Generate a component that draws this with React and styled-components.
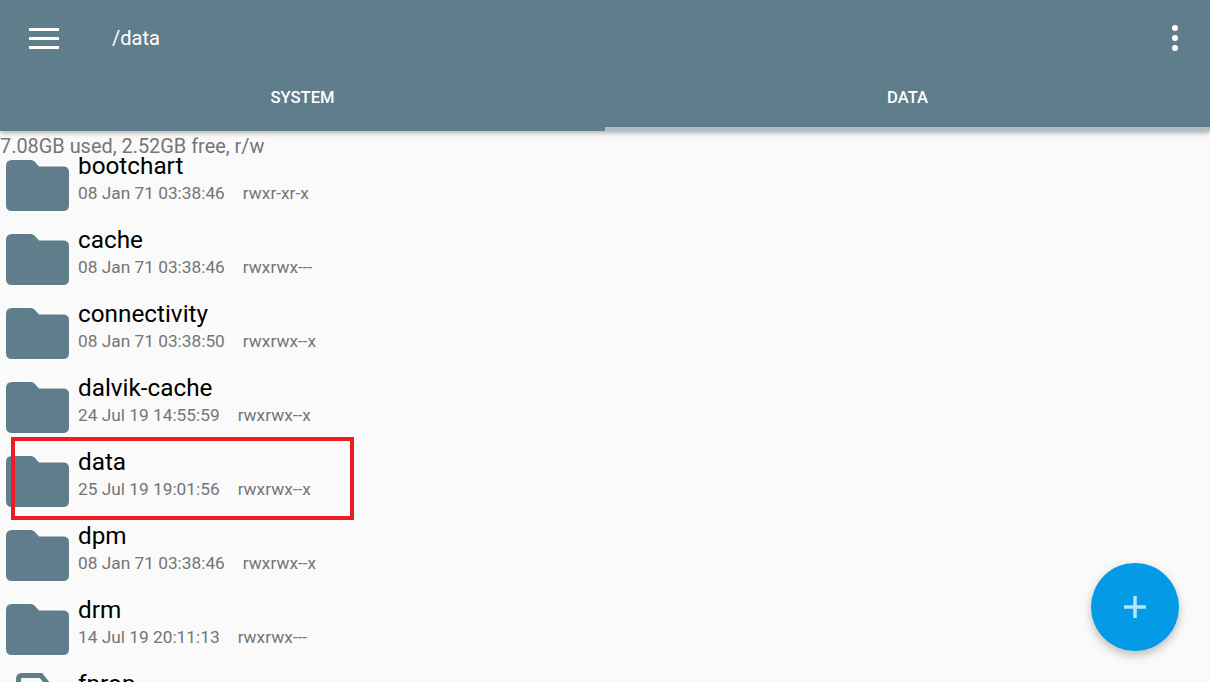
import React from 'react';
import styled, { createGlobalStyle } from 'styled-components';

const files = [
  { name: 'bootchart', date: '08 Jan 71 03:38:46', perms: 'rwxr-xr-x' },
  { name: 'cache', date: '08 Jan 71 03:38:46', perms: 'rwxrwx---' },
  { name: 'connectivity', date: '08 Jan 71 03:38:50', perms: 'rwxrwx--x' },
  { name: 'dalvik-cache', date: '24 Jul 19 14:55:59', perms: 'rwxrwx--x' },
  { name: 'data', date: '25 Jul 19 19:01:56', perms: 'rwxrwx--x' },
  { name: 'dpm', date: '08 Jan 71 03:38:46', perms: 'rwxrwx--x' },
  { name: 'drm', date: '14 Jul 19 20:11:13', perms: 'rwxrwx---' },
  { name: 'fprop', date: '', perms: '', isFile: true },
];

const GlobalStyle = createGlobalStyle`
  html, body {
    margin: 0;
    padding: 0;
    height: 100%;
    overflow: hidden;
    background: #fafafa;
    font-family: Roboto, "Liberation Sans", sans-serif;
  }
`;

const Page = styled.div`
  position: relative;
  width: 1210px;
  height: 682px;
  display: flex;
  flex-direction: column;
  background: #fafafa;
  overflow: hidden;
`;

const AppBar = styled.header`
  flex: none;
  height: 131px;
  background: #607d8b;
  display: flex;
  flex-direction: column;
  box-shadow: 0 2px 5px rgba(0, 0, 0, 0.3);
  z-index: 1;
`;

const Toolbar = styled.div`
  height: 76px;
  display: flex;
  align-items: center;
  padding: 0 32px 0 29px;
`;

const MenuButton = styled.div`
  width: 30px;
  display: flex;
  flex-direction: column;
  gap: 6px;
  margin-right: 53px;

  span {
    height: 3px;
    background: #fff;
  }
`;

const Path = styled.div`
  flex: 1;
  color: #fff;
  font-size: 20px;
`;

const Overflow = styled.div`
  display: flex;
  flex-direction: column;
  gap: 4px;

  span {
    width: 6px;
    height: 6px;
    border-radius: 50%;
    background: #fff;
  }
`;

const Tabs = styled.div`
  flex: 1;
  display: flex;
`;

const Tab = styled.div`
  flex: 1;
  display: flex;
  align-items: center;
  justify-content: center;
  padding-bottom: 9px;
  color: #fff;
  font-size: 16.6px;
  font-weight: 500;
  border-bottom: 4px solid ${(p) => (p.$active ? '#b0bec5' : 'transparent')};
`;

const Status = styled.div`
  flex: none;
  height: 26px;
  line-height: 32px;
  color: #757575;
  font-size: 19.9px;
  white-space: nowrap;
`;

const List = styled.div`
  flex: 1;
  overflow: hidden;
`;

const Rows = styled.div`
  margin-top: -9px;
`;

const Row = styled.div`
  height: 74px;
  display: flex;
  align-items: flex-start;
  padding-left: 6px;
`;

const IconSlot = styled.div`
  width: 72px;
  flex: none;
  padding-top: ${(p) => (p.$file ? 7 : 12)}px;
  display: flex;
`;

const Info = styled.div`
  display: flex;
  flex-direction: column;
  padding-top: 4px;
`;

const Name = styled.div`
  color: #000;
  font-size: 24.3px;
  line-height: 28px;
`;

const Meta = styled.div`
  display: flex;
  gap: 18px;
  margin-top: 2px;
  color: #757575;
  font-size: 17.3px;
  line-height: 22px;
`;

const Highlight = styled.div`
  position: absolute;
  left: 11px;
  top: 437px;
  width: 343px;
  height: 83px;
  box-sizing: border-box;
  border: 4px solid #ec1c24;
`;

const Fab = styled.div`
  position: absolute;
  left: 1091px;
  top: 563px;
  width: 88px;
  height: 88px;
  border-radius: 50%;
  background: #039be5;
  box-shadow: 0 4px 10px rgba(0, 0, 0, 0.25);
  display: flex;
  align-items: center;
  justify-content: center;
`;

const FolderIcon = () => (
  <svg width="63" height="51" viewBox="0 0 63 51">
    <path
      d="M6 0H25Q27 0 28.5 1.5L33 6.5H57Q63 6.5 63 12V45Q63 51 57 51H6Q0 51 0 45V6Q0 0 6 0Z"
      fill="#607d8b"
    />
  </svg>
);

const FileIcon = () => (
  <svg width="63" height="60" viewBox="0 0 63 60">
    <path
      d="M12.5 60V6Q12.5 2.5 16 2.5H35L44 14V60"
      fill="none"
      stroke="#607d8b"
      strokeWidth="5"
    />
  </svg>
);

const App = () => (
  <Page>
    <GlobalStyle />
    <AppBar>
      <Toolbar>
        <MenuButton>
          <span />
          <span />
          <span />
        </MenuButton>
        <Path>/data</Path>
        <Overflow>
          <span />
          <span />
          <span />
        </Overflow>
      </Toolbar>
      <Tabs>
        <Tab>SYSTEM</Tab>
        <Tab $active>DATA</Tab>
      </Tabs>
    </AppBar>
    <Status>7.08GB used, 2.52GB free, r/w</Status>
    <List>
      <Rows>
        {files.map((f) => (
          <Row key={f.name}>
            <IconSlot $file={f.isFile}>{f.isFile ? <FileIcon /> : <FolderIcon />}</IconSlot>
            <Info>
              <Name>{f.name}</Name>
              <Meta>
                <span>{f.date}</span>
                <span>{f.perms}</span>
              </Meta>
            </Info>
          </Row>
        ))}
      </Rows>
    </List>
    <Highlight />
    <Fab>
      <svg width="24" height="24" viewBox="0 0 24 24">
        <path d="M12 1V23M1 12H23" stroke="#b3e5fc" strokeWidth="3.5" />
      </svg>
    </Fab>
  </Page>
);

export default App;
